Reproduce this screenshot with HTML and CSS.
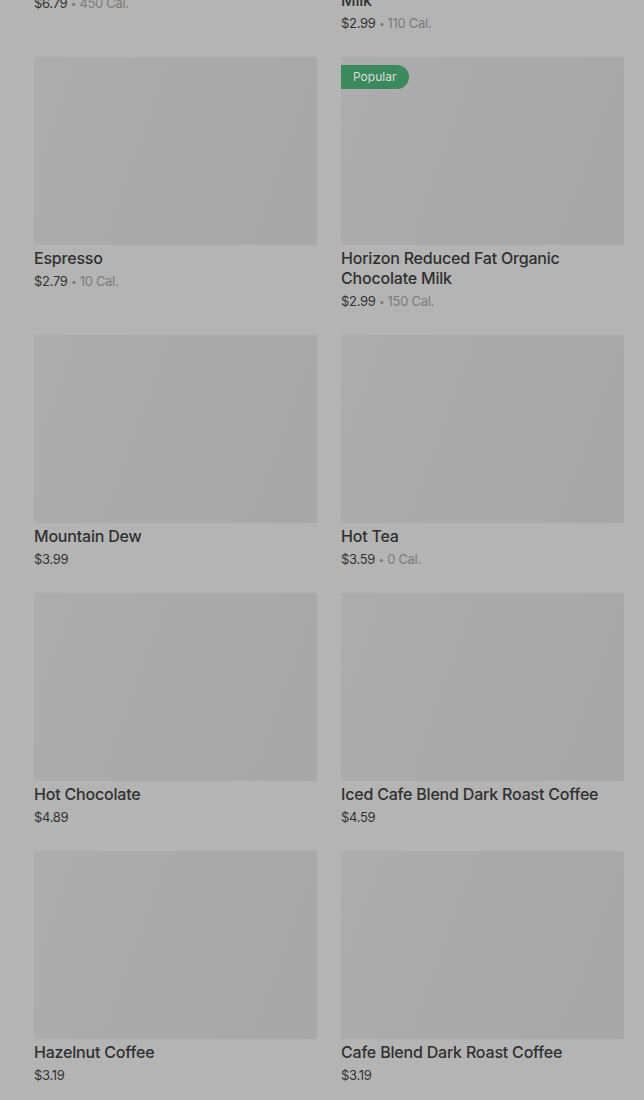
FILE: index.html
```html
<!DOCTYPE html>
<html lang="en">
<head>
    <meta charset="UTF-8">
    <meta name="viewport" content="width=device-width, initial-scale=1.0">
    <title>Menu</title>
    <link rel="stylesheet" href="styles.css">
</head>
<body>

<div class="menu">
    <div class="menu-grid">
        <!-- row scrolled past the top -->
        <div class="item">
            <div class="item-image"></div>
            <div class="item-name">Breakfast Sandwich</div>
            <div class="item-meta"><span class="price">$6.79</span> <span class="dot">&bull;</span> <span class="cal">450 Cal.</span></div>
        </div>
        <div class="item">
            <div class="item-image"></div>
            <div class="item-name">Horizon Organic Reduced Fat Vanilla Milk</div>
            <div class="item-meta"><span class="price">$2.99</span> <span class="dot">&bull;</span> <span class="cal">110 Cal.</span></div>
        </div>

        <div class="item">
            <div class="item-image"></div>
            <div class="item-name">Espresso</div>
            <div class="item-meta"><span class="price">$2.79</span> <span class="dot">&bull;</span> <span class="cal">10 Cal.</span></div>
        </div>
        <div class="item">
            <div class="item-image">
                <span class="badge">Popular</span>
            </div>
            <div class="item-name">Horizon Reduced Fat Organic Chocolate Milk</div>
            <div class="item-meta"><span class="price">$2.99</span> <span class="dot">&bull;</span> <span class="cal">150 Cal.</span></div>
        </div>

        <div class="item">
            <div class="item-image"></div>
            <div class="item-name">Mountain Dew</div>
            <div class="item-meta"><span class="price">$3.99</span></div>
        </div>
        <div class="item">
            <div class="item-image"></div>
            <div class="item-name">Hot Tea</div>
            <div class="item-meta"><span class="price">$3.59</span> <span class="dot">&bull;</span> <span class="cal">0 Cal.</span></div>
        </div>

        <div class="item">
            <div class="item-image"></div>
            <div class="item-name">Hot Chocolate</div>
            <div class="item-meta"><span class="price">$4.89</span></div>
        </div>
        <div class="item">
            <div class="item-image"></div>
            <div class="item-name">Iced Cafe Blend Dark Roast Coffee</div>
            <div class="item-meta"><span class="price">$4.59</span></div>
        </div>

        <div class="item">
            <div class="item-image"></div>
            <div class="item-name">Hazelnut Coffee</div>
            <div class="item-meta"><span class="price">$3.19</span></div>
        </div>
        <div class="item">
            <div class="item-image"></div>
            <div class="item-name">Cafe Blend Dark Roast Coffee</div>
            <div class="item-meta"><span class="price">$3.19</span></div>
        </div>
    </div>
</div>

</body>
</html>
```

FILE: styles.css
```css
body {
    margin: 0;
    padding: 0;
    background-color: #b4b4b4; /* page under the dark backdrop */
    font-family: Inter, "Noto Sans", sans-serif;
    color: #2f2f2f;
    overflow: hidden;
}
.menu {
    padding: 0 20px 0 34px;
}
.menu-grid {
    margin-top: -221px; /* list is scrolled */
    display: grid;
    grid-template-columns: 283px 283px;
    column-gap: 24px;
    row-gap: 25px;
    align-items: start;
}
.item-image {
    position: relative;
    height: 188px;
    background: linear-gradient(110deg, #adadad 0%, #aaaaaa 45%, #a8a8a8 100%);
}
.badge {
    position: absolute;
    top: 8px;
    left: 0;
    height: 24px;
    line-height: 24px;
    padding: 0 13px 0 12px;
    background-color: #3a8a5e;
    color: #dcdcdc;
    font-size: 12px;
    border-radius: 0 12px 12px 0;
}
.item-name {
    margin-top: 3px;
    font-size: 16px;
    font-weight: 500;
    line-height: 20px;
    letter-spacing: -0.2px;
    color: #303030;
}
.item-meta {
    margin-top: 4px;
    height: 18px;
    font-size: 13px;
    line-height: 18px;
    letter-spacing: -0.3px;
    color: #333;
}
.dot,
.cal {
    color: #7c7c7c;
}
.dot {
    font-size: 10px;
    line-height: 1;
    vertical-align: 1px;
}
```
